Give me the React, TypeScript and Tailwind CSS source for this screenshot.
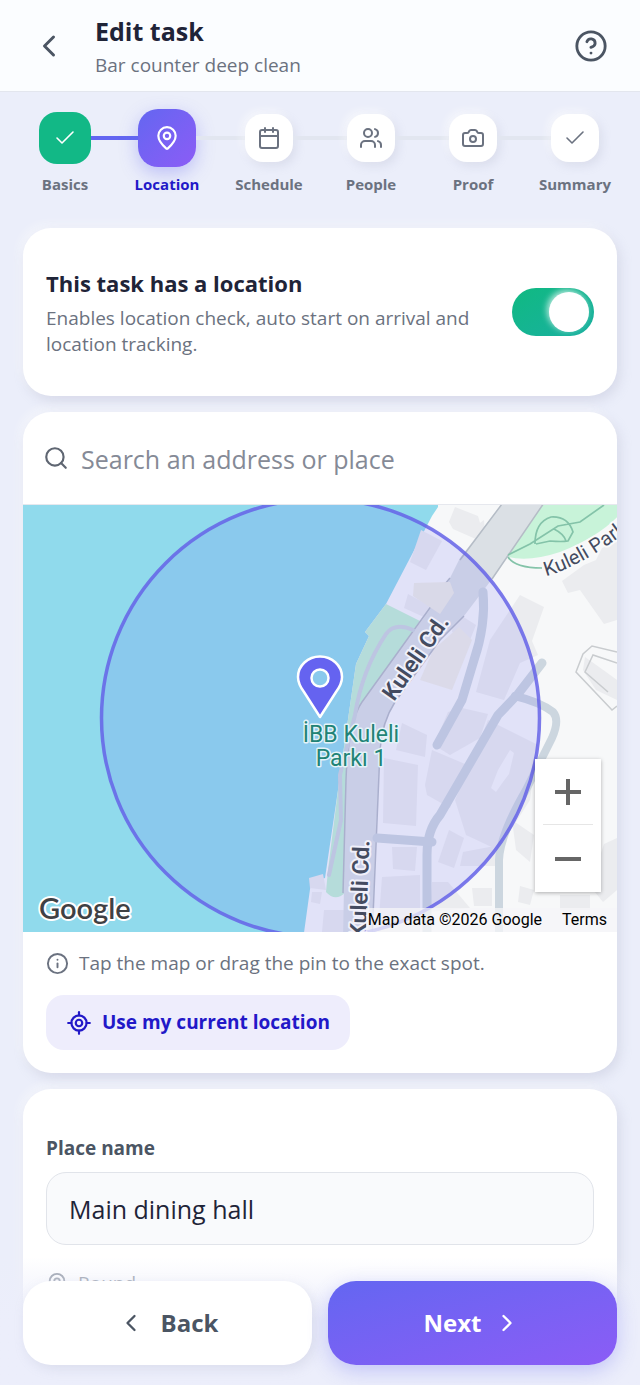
import { useState } from "react";
import {
  Calendar,
  Camera,
  Check,
  ChevronLeft,
  ChevronRight,
  CircleHelp,
  Info,
  LocateFixed,
  MapPin,
  Search,
  Users,
  type LucideIcon,
} from "lucide-react";

type StepState = "done" | "current" | "todo";

const steps: { label: string; icon: LucideIcon; state: StepState }[] = [
  { label: "Basics", icon: Check, state: "done" },
  { label: "Location", icon: MapPin, state: "current" },
  { label: "Schedule", icon: Calendar, state: "todo" },
  { label: "People", icon: Users, state: "todo" },
  { label: "Proof", icon: Camera, state: "todo" },
  { label: "Summary", icon: Check, state: "todo" },
];

const tile: Record<StepState, string> = {
  done: "size-[52px] rounded-[18px] bg-[#12b886] text-white",
  current:
    "size-[58px] rounded-[20px] bg-linear-to-br from-[#6366f1] to-[#8b5cf6] text-white shadow-[0_6px_18px_rgba(99,102,241,0.35)]",
  todo: "size-12 rounded-[18px] bg-white text-[#6b7280] shadow-[3px_4px_10px_rgba(160,165,190,0.22),-3px_-3px_8px_rgba(255,255,255,0.6)]",
};

const cardClass =
  "rounded-[28px] bg-white shadow-[3px_5px_12px_rgba(170,172,195,0.3),-4px_-4px_10px_rgba(255,255,255,0.45)]";

function Header() {
  return (
    <header className="flex h-[92px] shrink-0 items-center border-b border-[#e3e6ee] bg-[#fbfdff] pr-8 pl-[31px]">
      <button type="button" aria-label="Go back" className="mr-7 text-[#4b5563]">
        <ChevronLeft className="size-9" strokeWidth={2} />
      </button>
      <div className="min-w-0 flex-1 pt-1.5">
        <h1 className="text-[25px] leading-8 font-bold text-[#1f2438]">Edit task</h1>
        <p className="text-[19px] leading-9 text-[#6b7280]">Bar counter deep clean</p>
      </div>
      <button type="button" aria-label="Help" className="text-[#4b5563]">
        <CircleHelp className="size-[34px]" strokeWidth={2} />
      </button>
    </header>
  );
}

function Stepper() {
  return (
    <nav aria-label="Task steps" className="px-[14px] pt-4">
      <ol className="grid grid-cols-6">
        {steps.map(({ label, icon: Icon, state }, i) => (
          <li key={label} className="flex min-w-0 flex-col items-center">
            <div className="flex h-[60px] w-full items-center">
              <span
                className={`h-1 flex-1 ${i === 0 ? "bg-transparent" : i === 1 ? "bg-[#6366f1]" : "bg-[#e2e6f0]"}`}
              />
              <span className={`flex shrink-0 items-center justify-center ${tile[state]}`}>
                <Icon
                  className={state === "current" ? "size-[26px]" : "size-6"}
                  strokeWidth={Icon === Check ? 1.6 : 2}
                />
              </span>
              <span
                className={`h-1 flex-1 ${i === 5 ? "bg-transparent" : i === 0 ? "bg-[#6366f1]" : "bg-[#e2e6f0]"}`}
              />
            </div>
            <span
              className={`mt-1 text-[15px] leading-6 font-bold ${state === "current" ? "text-[#2218c8]" : "text-[#6b7280]"}`}
            >
              {label}
            </span>
          </li>
        ))}
      </ol>
    </nav>
  );
}

function LocationToggle() {
  const [on, setOn] = useState(true);
  return (
    <section className={`${cardClass} flex items-center justify-between gap-6 px-[23px] py-[39px]`}>
      <label htmlFor="has-location" className="min-w-0 max-w-[440px]">
        <span className="block text-[22px] leading-8 font-bold text-[#1f2438]">This task has a location</span>
        <span className="mt-1.5 block text-[19px] leading-[26px] text-[#6b7280]">
          Enables location check, auto start on arrival and location tracking.
        </span>
      </label>
      <span className="relative flex h-12 w-[82px] shrink-0">
        <input
          id="has-location"
          type="checkbox"
          role="switch"
          checked={on}
          onChange={(e) => setOn(e.target.checked)}
          className="peer size-full cursor-pointer appearance-none rounded-full bg-gray-300 checked:bg-linear-to-br checked:from-[#10b981] checked:to-[#1ab0a0]"
        />
        <span className="pointer-events-none absolute top-1 left-1 size-10 rounded-full bg-white shadow-[-2px_-2px_6px_rgba(255,255,255,0.7)] transition-transform peer-checked:translate-x-[33px]" />
      </span>
    </section>
  );
}

function MapDrawing() {
  return (
    <svg
      viewBox="23 505 594 427"
      preserveAspectRatio="xMidYMid slice"
      className="block h-full w-full"
      role="img"
      aria-label="Map around Kuleli Cd."
      fontFamily="Roboto, sans-serif"
    >
      <defs>
        <path id="park-street" d="M546 576Q588 565 650 513" />
      </defs>
      <rect x="23" y="505" width="594" height="427" fill="#f7f8f9" />
      {/* water */}
      <path
        d="M0 480H438V507L432 516L386 604L365 632L369 636L356 664L345 740L338 790L325 878L311 882L303 940H0Z"
        fill="#90daec"
      />
      {/* parks */}
      <path d="M386 604L420 621L380 681L350 730L346 780L345 893Q335 902 326 892L328 870L338 790L345 740L356 664L369 636L365 632Z" fill="#c3f1d6" />
      <path d="M539 500H620V514Q600 536 560 552Q530 562 508 557Z" fill="#c8f3d9" />
      {/* buildings */}
      <g fill="#ebecef">
        <path d="M455 507L478 516L480 523L484 520L485 534L478 540L453 529L449 522Z" />
        <path d="M421 530L442 541L426 570L410 562Z" />
        <path d="M562 581L584 565L596 560L602 548L617 542V620L604 624L580 590L568 593Z" />
        <path d="M520 595L544 607L532 641L538 655L520 663L504 700L476 692L490 640Z" />
        <path d="M408 594L430 606L426 618L404 608Z" />
        <path d="M454 611L476 625L470 640L452 632Z" />
        <path d="M585 657L606 672L617 680V700L596 690L583 670Z" />
        <path d="M462 708L488 714L480 738L450 755L434 745L448 712Z" />
        <path d="M384 758L418 765L416 826L383 823Z" />
        <path d="M432 750L465 764L450 808L427 795L425 785Z" />
        <path d="M402 723L427 735L425 757L396 750Z" />
        <path d="M392 847H417L415 871L393 869Z" />
        <path d="M382 877L420 875V932H378Z" />
        <path d="M449 830L464 838L454 868L438 862Z" />
        <path d="M432 882H448L470 908L430 912Z" />
        <path d="M488 720L538 745L530 800L498 850L466 835L455 800L470 765Z" />
        <path d="M463 852L500 845L502 866L460 866Z" />
        <path d="M512 820L534 835L530 862L516 850Z" />
        <path d="M604 844L617 838V890L603 902L590 886Z" />
        <path d="M472 888H492V906H474ZM520 886L534 890L530 905L518 902ZM560 895H590V910H560Z" />
        <path d="M309 878L323 874L326 890L310 888Z" />
        <path d="M312 892H322L320 904L311 902ZM324 910H348V932H322Z" />
      </g>
      <path d="M510 750L514 753L509 774L503 782L496 792L491 788L498 770Z" fill="#f7f8f9" />
      <path d="M459 627L472 640L452 690L420 680L433 650Z" fill="#f0efe8" />
      {/* retaining wall outlines */}
      <path d="M617 652L592 646L583 654L576 672L612 710L617 706M617 663L593 655L585 672L608 692" fill="none" stroke="#c9cccf" strokeWidth="1.5" />
      {/* main road */}
      <path
        d="M505 500H546L492 579L464 616L440 640L395 702Q382 722 380 750L375 855L372 940H343L346 780Q348 722 362 702L428 612L448 582L460 558Z"
        fill="#dbe0e5"
      />
      <path
        d="M546 500L492 579M464 616L440 640L395 702Q382 722 380 750L372 940M505 500L460 560M450 578L440 590M432 605L362 702Q348 722 346 780L343 893"
        fill="none"
        stroke="#b5bcc6"
        strokeWidth="1.5"
      />
      <path d="M414 583L450 582L454 593L440 614L425 604L413 596Z" fill="#eeede6" />
      {/* side streets */}
      <g fill="none" stroke="#ccd6df" strokeLinecap="round" strokeLinejoin="round">
        <path d="M483 592Q486 625 474 660L462 700L437 745" strokeWidth="9" />
        <path d="M542 663L518 694L498 715L440 815Q427 830 427 855V940" strokeWidth="9" />
        <path d="M377 838L432 842" strokeWidth="9" />
        <path d="M515 696Q540 702 553 712Q560 720 552 738L526 790Q500 835 499 860V940" strokeWidth="8" />
        <path d="M413 630Q395 622 386 634Q362 670 355 715L340 775L341 820L329 875" strokeWidth="4" />
      </g>
      {/* footpaths */}
      <path d="M508 555L530 544L558 526L580 522L604 505M535 544Q535 522 551 517Q568 516 573 532L568 541Q562 542 550 541L536 544M508 557Q515 568 542 568M554 529Q564 534 566 541" fill="none" stroke="#84c3a9" strokeWidth="1.7" />
      {/* radius */}
      <circle cx="320.5" cy="718" r="219" fill="#7070f2" fillOpacity="0.16" stroke="#6563e8" strokeOpacity="0.85" strokeWidth="3.5" />
      {/* street and place names */}
      <g fill="#444b60" stroke="#f0f0fa" strokeWidth="4" strokeLinejoin="round" paintOrder="stroke" fontSize="23">
        <text transform="translate(394 702) rotate(-55)" fontWeight="600">Kuleli Cd.</text>
        <text transform="translate(366 938) rotate(-88)" fontWeight="600">Kuleli Cd.</text>
        <text fontSize="20" stroke="#fafafa">
          <textPath href="#park-street">Kuleli Parkı</textPath>
        </text>
      </g>
      <g fill="#218376" stroke="#e4f3f8" strokeWidth="3" strokeLinejoin="round" paintOrder="stroke" fontSize="23" textAnchor="middle">
        <text x="351" y="742">İBB Kuleli</text>
        <text x="351" y="766">Parkı 1</text>
      </g>
      {/* pin */}
      <path
        d="M320 717L304 692Q298 684 298 677A22 20.5 0 0 1 342 677Q342 684 336 692ZM320 669.5A8.5 8.5 0 1 0 320 686.5A8.5 8.5 0 1 0 320 669.5Z"
        fill="#6563f0"
        fillRule="evenodd"
        stroke="#fff"
        strokeWidth="2.5"
        strokeLinejoin="round"
      />
      <text x="39" y="919" fontFamily="Lato, sans-serif" fontSize="29" fontWeight="600" fill="#3f4144" stroke="#fff" strokeWidth="4" strokeLinejoin="round" paintOrder="stroke">
        Google
      </text>
    </svg>
  );
}

function MapCard() {
  return (
    <section className={`${cardClass} overflow-hidden`}>
      <div className="flex h-[93px] items-center gap-3 border-b border-[#e6e8ee] pr-6 pl-5">
        <Search className="size-[26px] shrink-0 text-[#5f6672]" strokeWidth={2} />
        <input
          type="search"
          aria-label="Search an address or place"
          placeholder="Search an address or place"
          className="min-w-0 flex-1 bg-transparent pt-0.5 text-[25px] leading-9 text-[#1f2438] outline-none placeholder:text-[#858a96]"
        />
      </div>
      <div className="relative h-[427px] overflow-hidden">
        <MapDrawing />
        <div className="absolute right-4 bottom-10 flex w-[66px] flex-col bg-white px-2 text-[#666] shadow-[0_1px_4px_rgba(0,0,0,0.3)]">
          <button type="button" aria-label="Zoom in" className="flex h-[66px] items-center justify-center border-b border-[#e6e6e6]">
            <svg viewBox="0 0 28 28" className="size-7" stroke="currentColor" strokeWidth="4" aria-hidden="true">
              <path d="M1 14H27M14 1V27" />
            </svg>
          </button>
          <button type="button" aria-label="Zoom out" className="flex h-[67px] items-center justify-center">
            <svg viewBox="0 0 28 28" className="size-7" stroke="currentColor" strokeWidth="4" aria-hidden="true">
              <path d="M1 14H27" />
            </svg>
          </button>
        </div>
        <div className="absolute right-0 bottom-0 flex gap-5 bg-[#f5f5f8]/75 pr-[10px] pl-[2px] font-[Roboto,sans-serif] text-base leading-6 text-black">
          <span>Map data ©2026 Google</span>
          <a href="#terms">Terms</a>
        </div>
      </div>
      <div className="px-[23px] pt-4 pb-[23px]">
        <p className="flex items-center gap-[10px] text-[19px] leading-[30px] text-[#6b7280]">
          <Info className="size-[23px] shrink-0" strokeWidth={2} />
          Tap the map or drag the pin to the exact spot.
        </p>
        <button
          type="button"
          className="mt-[17px] flex h-[55px] items-center gap-[10px] rounded-[18px] bg-[#eeedfc] px-5 text-[19px] font-bold text-[#2218c8]"
        >
          <LocateFixed className="size-[26px]" strokeWidth={2} />
          Use my current location
        </button>
      </div>
    </section>
  );
}

function PlaceCard() {
  return (
    <section className={`${cardClass} px-[23px] pt-11 pb-32`}>
      <label htmlFor="place-name" className="block text-[19px] leading-[30px] font-bold text-[#4b5563]">
        Place name
      </label>
      <input
        id="place-name"
        defaultValue="Main dining hall"
        className="mt-[9px] h-[73px] w-full rounded-[20px] border border-[#e1e4ea] bg-[#f9fafc] px-[22px] text-[25px] text-[#1f2438] outline-none"
      />
      <p className="mt-6 flex items-center gap-[10px] text-[19px] leading-7 text-[#9299a5]">
        <MapPin className="size-[22px]" strokeWidth={2} />
        Round
      </p>
    </section>
  );
}

function ActionBar() {
  return (
    <footer className="absolute inset-x-0 bottom-0 grid grid-cols-2 gap-4 bg-linear-to-b from-[#eceefb]/0 to-[#eceefb] to-50% px-[23px] pt-6 pb-5">
      <button
        type="button"
        className="flex h-[84px] items-center justify-center gap-4 rounded-[28px] bg-white text-2xl font-bold text-[#4b5563] shadow-[3px_4px_12px_rgba(160,165,190,0.22)]"
      >
        <ChevronLeft className="size-7" strokeWidth={2} />
        Back
      </button>
      <button
        type="button"
        className="flex h-[84px] items-center justify-center gap-3 rounded-[28px] bg-linear-to-br from-[#6366f1] to-[#8b5cf6] text-2xl font-bold text-white shadow-[0_6px_20px_rgba(99,102,241,0.3)]"
      >
        Next
        <ChevronRight className="size-7" strokeWidth={2} />
      </button>
    </footer>
  );
}

export default function App() {
  return (
    <div className="relative flex h-screen flex-col overflow-hidden bg-[#ebeefa] font-['Open_Sans',sans-serif]">
      <Header />
      <Stepper />
      <main className="flex min-h-0 flex-1 flex-col gap-4 overflow-y-auto px-[23px] pt-8 [scrollbar-width:none] *:shrink-0">
        <LocationToggle />
        <MapCard />
        <PlaceCard />
      </main>
      <ActionBar />
    </div>
  );
}
